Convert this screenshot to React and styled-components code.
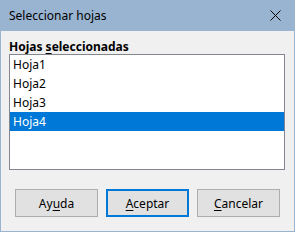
import React from "react";
import styled, { createGlobalStyle } from "styled-components";

const Global = createGlobalStyle`
  html, body { margin: 0; padding: 0; background: #f0f0f0; }
  body { font-family: "Noto Sans", "Segoe UI", sans-serif; }
`;

const Window = styled.div`
  width: 295px;
  height: 232px;
  box-sizing: border-box;
  border: 1px solid #99b4d1;
  border-top: none;
  background: #f0f0f0;
  display: flex;
  flex-direction: column;
`;

const TitleBar = styled.div`
  height: 31px;
  margin: 0 -1px;
  background: #99b4d1;
  display: flex;
  align-items: center;
  justify-content: space-between;
  padding: 0 10px 0 9px;
  font-size: 12px;
  color: #000;
`;

const Close = styled.div`
  width: 20px;
  height: 20px;
  display: flex;
  align-items: center;
  justify-content: center;
`;

const Body = styled.div`
  flex: 1;
  display: flex;
  flex-direction: column;
  padding: 8px 8px 0 8px;
`;

const Label = styled.div`
  font-size: 12px;
  font-weight: 700;
  line-height: 15px;
  height: 15px;
  color: #000;
`;

const List = styled.div`
  height: 116px;
  box-sizing: border-box;
  border: 1px solid #828790;
  background: #fff;
  margin-right: 1px;
`;

const Row = styled.div`
  height: 19px;
  line-height: 19px;
  padding-left: 3px;
  font-size: 12px;
  color: ${(p) => (p.$selected ? "#fff" : "#000")};
  background: ${(p) => (p.$selected ? "#0078d7" : "transparent")};
`;

const Buttons = styled.div`
  display: flex;
  gap: 8px;
  margin-top: 19px;
  padding-left: 6px;
`;

const Button = styled.div`
  width: 83px;
  height: 28px;
  box-sizing: border-box;
  border: ${(p) => (p.$default ? "2px solid #0078d7" : "1px solid #adadad")};
  background: #e1e1e1;
  display: flex;
  align-items: center;
  justify-content: center;
  font-size: 12px;
  color: #000;
`;

const U = styled.span`
  text-decoration: underline;
  text-underline-offset: 2px;
`;

export default function App() {
  const sheets = ["Hoja1", "Hoja2", "Hoja3", "Hoja4"];
  return (
    <>
      <Global />
      <Window>
        <TitleBar>
          <span>Seleccionar hojas</span>
          <Close>
            <svg width="11" height="11" viewBox="0 0 11 11">
              <path d="M0.5 0.5 L10.5 10.5 M10.5 0.5 L0.5 10.5" stroke="#000" strokeWidth="1" />
            </svg>
          </Close>
        </TitleBar>
        <Body>
          <Label>
            Hojas <U>s</U>eleccionadas
          </Label>
          <List>
            {sheets.map((s, i) => (
              <Row key={s} $selected={i === 3}>
                {s}
              </Row>
            ))}
          </List>
          <Buttons>
            <Button>
              Ay<U>u</U>da
            </Button>
            <Button $default>
              <U>A</U>ceptar
            </Button>
            <Button>
              <U>C</U>ancelar
            </Button>
          </Buttons>
        </Body>
      </Window>
    </>
  );
}
